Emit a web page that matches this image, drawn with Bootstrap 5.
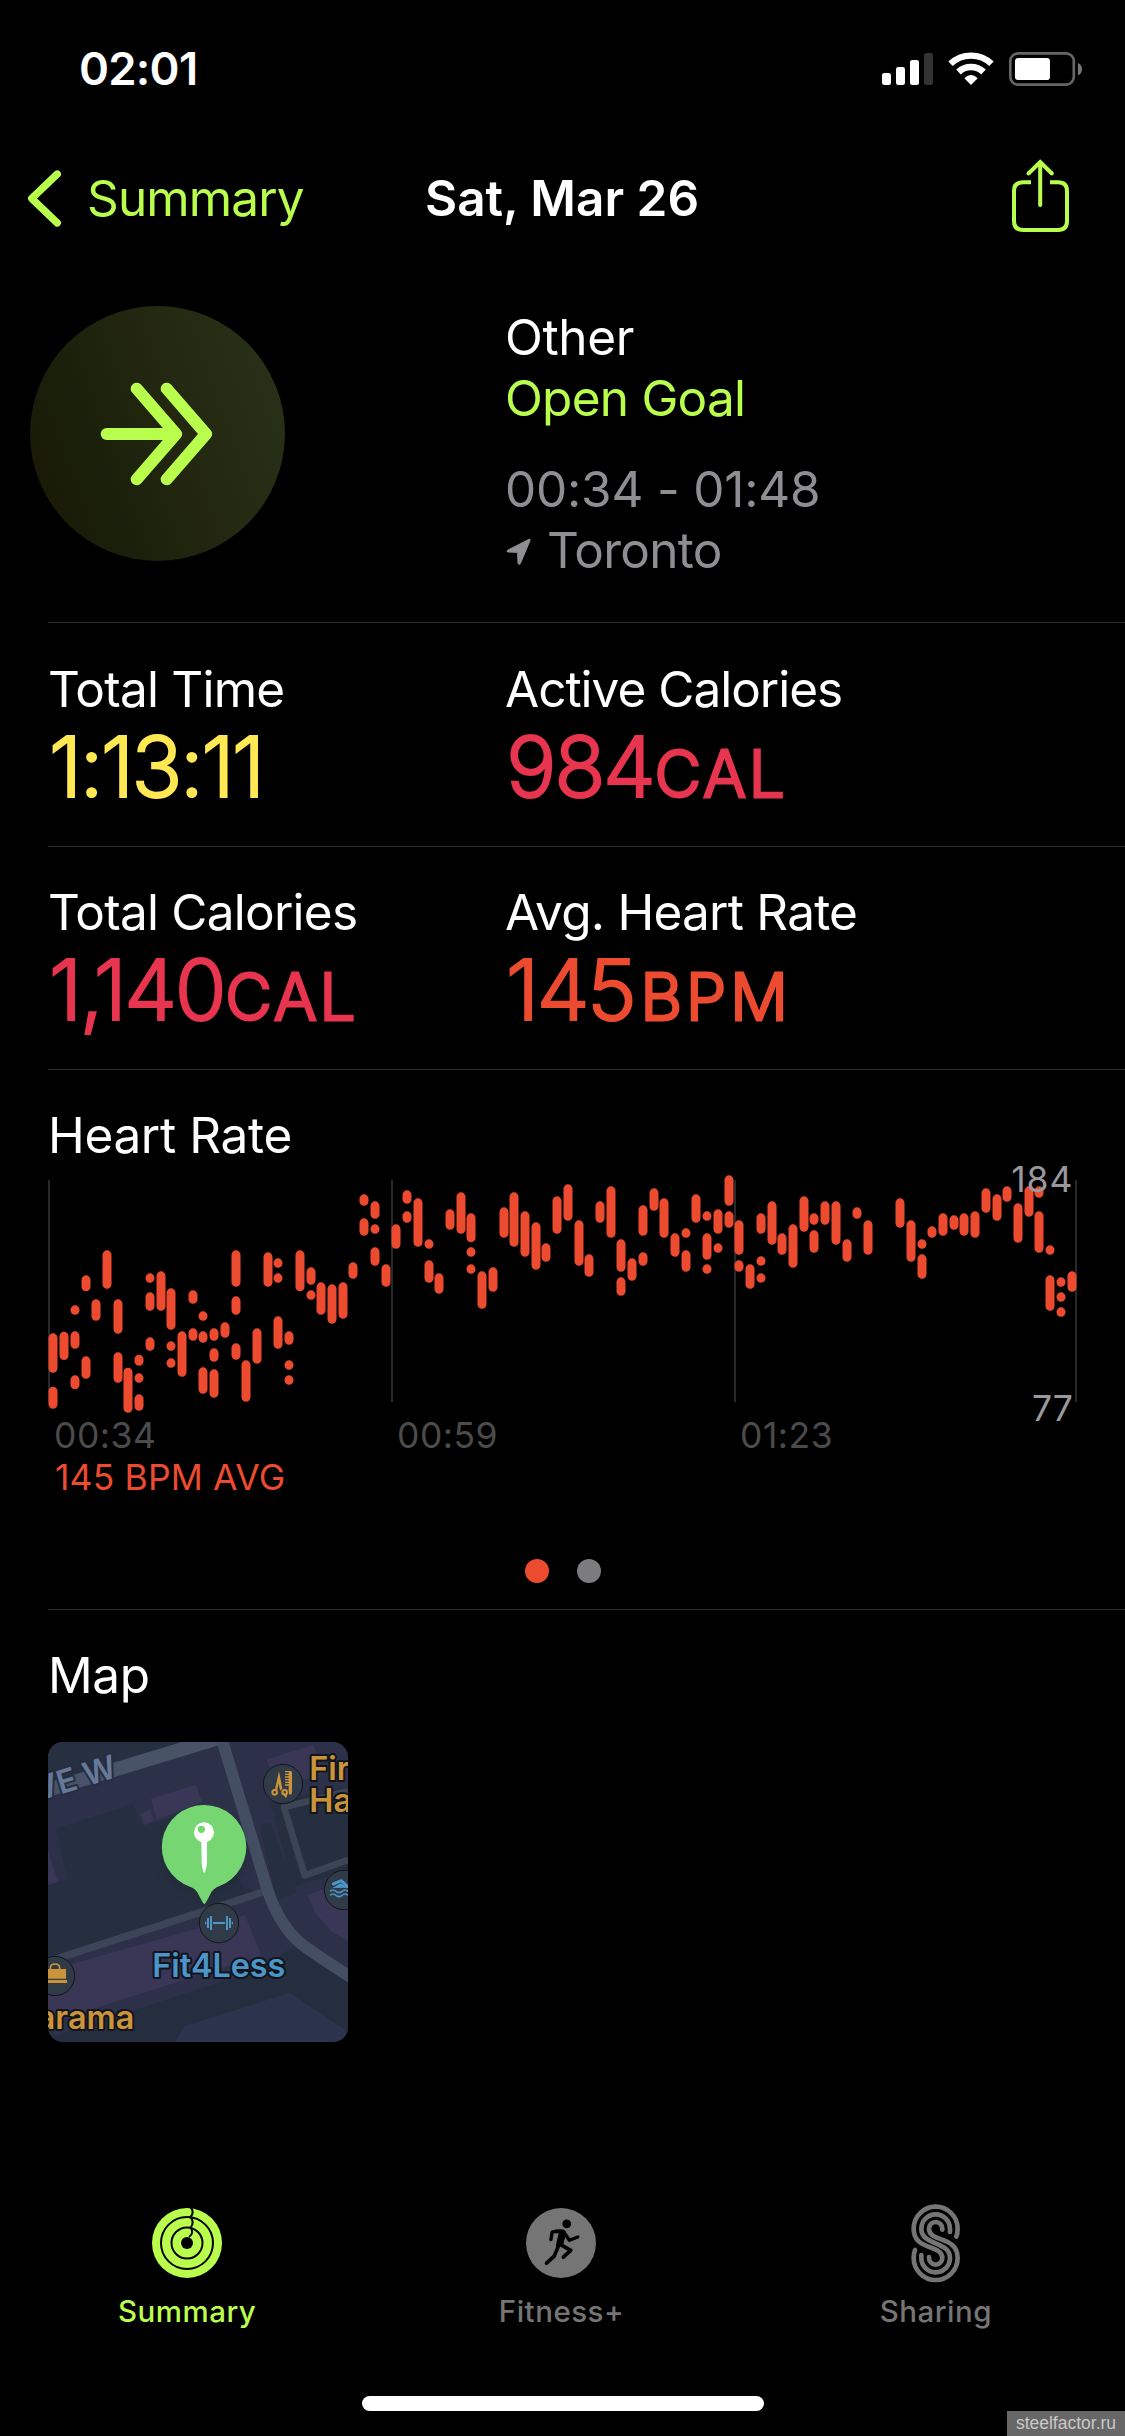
<!DOCTYPE html>
<html lang="en">
<head>
<meta charset="utf-8">
<title>Workout Summary</title>
<meta name="viewport" content="width=device-width, initial-scale=1">
<link href="https://cdn.jsdelivr.net/npm/bootstrap@5.3.0/dist/css/bootstrap.min.css" rel="stylesheet">
<style>
  :root { --lime: #bafe4d; --orange: #ec4b30; --pink: #e8354f; --yellow: #ffe853; --hair: #2d2d2f; --mute: #8e8e93; }
  body { background: #000; color: #fff; font-family: Inter, "Liberation Sans", sans-serif; font-size: 49.5px; line-height: 61px; }
  svg { display: block; flex: none; overflow: visible; }
  .screen { width: 1125px; height: 2436px; overflow: hidden; }
  .lime { color: var(--lime); } .orange { color: var(--orange); } .pink { color: var(--pink); } .yellow { color: var(--yellow); } .mute { color: var(--mute); }
  .ls-1 { letter-spacing: -1px; } .ls-2 { letter-spacing: -.76px; } .ls-3 { letter-spacing: -.35px; }

  .statusbar { height: 137px; padding: 0 42px 0 79px; }
  .clock { font-size: 45.5px; font-weight: 600; letter-spacing: -.75px; }
  .topnav { height: 122px; padding: 0 55px 0 28px; }
  .topnav .back { padding-left: 26px; letter-spacing: -.85px; }
  .topnav .side { width: 360px; }
  .topnav .side:first-child { width: 397px; }

  .hero { height: 363px; padding-left: 30px; }
  .hero-badge { width: 255px; height: 255px; margin-top: 47px; background: linear-gradient(70deg, #191a06 8%, #1a200b 30%, #23270f 55%, #283118 92%); }
  .hero-info { margin: 48px 0 0 220px; }
  .hero-time { margin-top: 30px; letter-spacing: -.2px; }

  .rule { border-top: 1px solid var(--hair); margin-left: 48px; }
  .metric { height: 223.5px; }
  .metric > div { padding-top: 35.5px; }
  .metric > div:first-child { width: 457px; }
  .metric-value { font-size: 84px; font-weight: 300; line-height: 90px; margin-top: 2px; padding-left: 1px; letter-spacing: -2.4px; -webkit-text-stroke: 2px currentColor; stroke-linejoin: round; }
  .metric-value small { font-size: 64px; letter-spacing: 2.8px; margin-left: 1px; -webkit-text-stroke-width: 2.8px; }
  .metric-value small.wide { letter-spacing: 4px; margin-left: 6px; }

  .hr-block { height: 540px; }
  .hr-block h2, .map-block h2 { font-size: inherit; font-weight: 400; line-height: 61px; padding-top: 35px; margin: 0; }
  .plot { margin-top: -.5px; }
  .plot text { font-size: 106.5px; fill: #98989d; letter-spacing: 2.5px; }
  .plot .low { letter-spacing: 0; }
  .ticks { font-size: 35.5px; line-height: 42px; color: #4b4b4b; letter-spacing: .5px; margin-top: 9px; }
  .ticks span { width: 343px; padding-left: 6px; }
  .avg { font-size: 35.5px; line-height: 42px; padding-left: 7px; letter-spacing: .15px; }
  .pager { gap: 28px; margin: 60px 47px 0 0; }
  .pager i { width: 24px; height: 24px; background: #7c7c80; }
  .pager i:first-child { background: var(--orange); }

  .map-tile { width: 300px; height: 300px; border-radius: 15px; overflow: hidden; margin-top: 36px; }
  .map-tile text { font-weight: 600; paint-order: stroke; stroke: #12141c; stroke-width: 12px; stroke-linejoin: round; }

  .tabs { margin-top: 161.5px; padding-right: 2px; font-size: 29.5px; font-weight: 500; line-height: 40px; color: #757575; letter-spacing: .5px; }
  .tabs .icon { height: 78px; margin-bottom: 9.5px; }
  .home { width: 402px; height: 15px; border-radius: 8px; background: #fff; margin: 65px auto 0; }
  .stamp { right: 0; bottom: 0; width: 118px; height: 25px; background: #676767; color: #c9c9c9; font: 17.5px/25px "Liberation Sans", Arial, sans-serif; }
</style>
</head>
<body>
<div class="screen position-relative d-flex flex-column">

  <header class="statusbar d-flex justify-content-between align-items-center">
    <span class="clock">02:01</span>
    <svg width="203.3" height="36.7" viewBox="60 60 610 110">
      <g fill="#fff"><rect x="66" y="129" width="27" height="36" rx="7"/><rect x="108" y="111" width="27" height="54" rx="7"/><rect x="150" y="90" width="27" height="75" rx="7"/></g>
      <rect x="192" y="69" width="27" height="96" rx="7" fill="#333"/>
      <g fill="none" stroke="#fff"><path d="M271.6 101.4A89 89 0 0 1 394.4 101.4" stroke-width="19"/><path d="M295.5 126A54.500 54.500 0 0 1 370.500 126" stroke-width="20"/></g>
      <path d="M333 165L313 145Q333 125 353 145Z" fill="#fff"/>
      <rect x="451" y="70" width="190.500" height="94" rx="23" fill="none" stroke="#666" stroke-width="8"/>
      <rect x="465" y="84" width="105" height="66" rx="10" fill="#fff"/>
      <path d="M654 99Q666 104 666 117.500T654 136Z" fill="#777"/>
    </svg>
  </header>

  <nav class="topnav d-flex justify-content-between align-items-center">
    <a class="side d-flex align-items-center text-decoration-none lime">
      <svg width="33" height="57" viewBox="28 169 33 57"><path d="M57.300 173L31.700 197.500L57.300 222" fill="none" stroke="#bafe4d" stroke-width="7.300" stroke-linecap="round" stroke-linejoin="round"/></svg>
      <span class="back">Summary</span>
    </a>
    <span class="fw-semibold text-nowrap flex-fill">Sat, Mar 26</span>
    <span class="side d-flex justify-content-end">
      <svg width="60" height="76" viewBox="1010 160 60 76"><path d="M1031 182.300H1023Q1014 182.300 1014 191V221Q1014 230 1023 230H1058Q1067 230 1067 221V191Q1067 182.300 1058 182.300H1050M1040.200 205V162.500M1028.500 173.500L1040.200 162L1051.800 173.500" fill="none" stroke="#bafe4d" stroke-width="4"/><g fill="#bafe4d"><circle cx="1040.200" cy="205" r="2"/><circle cx="1028.500" cy="173.500" r="2"/><circle cx="1051.800" cy="173.500" r="2"/></g></svg>
    </span>
  </nav>

  <section class="hero d-flex align-items-start">
    <div class="hero-badge rounded-circle">
      <svg width="255" height="255" viewBox="30 468 765 765"><path d="M350 716L468 852L350 988M440 716L558 852L440 988M260 852H460" fill="none" stroke="#bafe4d" stroke-width="36" stroke-linecap="round" stroke-linejoin="round"/></svg>
    </div>
    <div class="hero-info">
      <div class="ls-3">Other</div>
      <div class="lime ls-2">Open Goal</div>
      <div class="hero-time mute">00:34 - 01:48</div>
      <div class="mute ls-2 d-flex align-items-center">
        <svg width="42" height="30" viewBox="45 50 126 90"><path d="M54 92L117 60Q121 59 120 64L91 133Q86 138 84 132L83 102Q82 99 78 99L53 98Q48 96 54 92Z" fill="#8e8e93" stroke="#8e8e93" stroke-width="3"/></svg>Toronto
      </div>
    </div>
  </section>

  <section class="rule metric d-flex">
    <div><div class="ls-2">Total Time</div><div class="metric-value yellow">1:13:11</div></div>
    <div><div class="ls-1">Active Calories</div><div class="metric-value pink">984<small>CAL</small></div></div>
  </section>
  <section class="rule metric d-flex">
    <div><div class="ls-2">Total Calories</div><div class="metric-value pink">1,140<small>CAL</small></div></div>
    <div><div class="ls-2">Avg. Heart Rate</div><div class="metric-value orange">145<small class="wide">BPM</small></div></div>
  </section>

  <section class="rule hr-block">
    <h2 class="ls-3">Heart Rate</h2>
    <svg class="plot" width="1029" height="240" viewBox="54 18 3087 720">
      <path d="M57 60V726M1086 60V726M2115 60V726M3138 60V726" stroke="#29292b" stroke-width="6"/>
      <path id="beats" fill="none" stroke="#ec4b30" stroke-width="27" stroke-linecap="round"/>
      <text x="2944" y="96">184</text>
      <text class="low" x="3006" y="783">77</text>
    </svg>
    <div class="ticks d-flex"><span>00:34</span><span>00:59</span><span>01:23</span></div>
    <div class="avg orange">145 BPM AVG</div>
    <div class="pager d-flex justify-content-center"><i class="rounded-circle"></i><i class="rounded-circle"></i></div>
  </section>

  <section class="rule map-block">
    <h2 class="ls-3">Map</h2>
    <div class="map-tile">
      <svg width="300" height="300" viewBox="54 66 900 900">
        <rect x="54" y="66" width="900" height="900" fill="#2c3049"/>
        <path d="M54 66H460L54 190Z" fill="#263040"/>
        <path d="M76 326L310 252L338 318L500 270L640 500L690 520L54 720V495L112 478Z" fill="#252f3f"/>
        <path d="M54 390L84 486L54 495Z" fill="#393656"/>
        <path d="M362 236L498 194L516 246L380 300Z M332 282L360 268L372 302L344 314Z" fill="#393656"/>
        <path d="M710 118L850 74L880 160L740 206Z" fill="#393656"/>
        <path d="M722 250L790 500L954 450V200Z M690 318L722 306L800 520L740 540Z" fill="#252f3f"/>
        <path d="M54 752L645 585L694 706L54 910Z" fill="#393656"/>
        <path d="M832 524L954 480V664L905 635L856 580Z" fill="#393656"/>
        <path d="M54 955L700 744L790 680L954 790V966H54Z" fill="#242e3f"/>
        <path d="M435 966L465 918L780 818L954 935V966Z" fill="#2b344c"/>
        <g fill="none" stroke-linejoin="round">
          <path d="M954 214L762 262L824 466L954 420" stroke="#3c4556" stroke-width="20"/>
          <path d="M80 716L700 516" stroke="#3c4558" stroke-width="22"/>
          <path d="M40 214L580 50" stroke="#485368" stroke-width="42"/>
          <path d="M576 60L712 508Q748 616 812 670Q850 700 970 776" stroke="#444e63" stroke-width="35"/>
        </g>
        <g fill="#313b47" stroke="#11161b" stroke-width="3"><circle cx="759" cy="192" r="59"/><circle cx="942" cy="510" r="59"/><circle cx="567" cy="609" r="59"/><circle cx="75" cy="768" r="59"/></g>
        <g stroke="#cc943a" fill="none" stroke-width="6"><circle cx="734" cy="217" r="7"/><circle cx="764" cy="217" r="7"/></g>
        <path d="M747 154L757 206L750 212L746 190L741 212L735 208ZM758 215L772 227L768 234L755 219Z" fill="#cc943a"/>
        <path d="M776 153H783Q786 153 786 160V216Q786 224 780 224Q776 224 776 216Z" fill="#cc943a"/>
        <path d="M765 155H778M765 163H778M765 171H778M765 179H778M765 187H778M765 195H778" stroke="#cc943a" stroke-width="4"/>
        <g fill="none" stroke="#4b95c8"><path d="M549 609H585" stroke-width="6"/><path d="M543 588V630M591 588V630" stroke-width="6"/><path d="M534 594V624M600 594V624" stroke-width="6"/><path d="M527 605V613M607 605V613" stroke-width="4"/>
        <path d="M900 514q9 -8 18 0t18 0t18 0M900 526q9 -8 18 0t18 0t18 0" stroke-width="5"/><path d="M910 492L934 482L952 500" stroke-width="9" stroke-linejoin="round" stroke-linecap="round"/></g>
        <path d="M908 504L932 490L954 503Z" fill="#4b95c8"/>
        <path d="M54 747H108V776H54ZM54 780H111V789H54Z" fill="#cc943a"/>
        <path d="M61 748V744Q61 732 75 732T89 744V748" fill="none" stroke="#cc943a" stroke-width="5"/>
        <text x="367" y="771" font-size="97" fill="#4b95c8">Fit4Less</text>
        <text x="838" y="181" font-size="97" fill="#cc943a">Fir</text>
        <text x="838" y="277" font-size="97" fill="#cc943a">Ha</text>
        <text x="20" y="928" font-size="97" fill="#cc943a" letter-spacing=".3">arama</text>
        <text transform="translate(24 244) rotate(-17)" font-size="97" fill="#66789a" style="stroke:#262d3e">VE W</text>
        <g>
          <ellipse cx="522" cy="410" rx="122" ry="112" fill="#1d2634" opacity=".5" style="filter:blur(18px)"/>
          <path d="M523 255A126 126 0 0 1 567 499Q550 504 540 524Q530 545 523 553Q516 545 506 524Q498 506 480 500A126 126 0 0 1 523 255Z" fill="#76d672"/>
          <path d="M514 360H531V430Q528 452 523 460Q517 452 515 430Z" fill="#fff"/>
          <circle cx="522" cy="337" r="30" fill="#fff"/><circle cx="514" cy="328" r="11" fill="#76d672"/>
        </g>
      </svg>
    </div>
  </section>

  <footer class="tabs d-flex text-center">
    <div class="flex-fill w-100 lime">
      <div class="icon d-flex justify-content-center align-items-center">
        <svg width="70" height="70" viewBox="-35 -35 70 70"><circle r="35" fill="#bafe4d"/><circle r="6" fill="#000"/><g fill="none" stroke="#000" stroke-width="2"><circle r="26"/><circle r="15.500"/><path d="M3.500 -36Q8 -30.500 3.500 -26Q8 -20.500 3.500 -15.500Q7.500 -10 2 -6"/></g></svg>
      </div>Summary
    </div>
    <div class="flex-fill w-100">
      <div class="icon d-flex justify-content-center align-items-center">
        <svg width="70" height="70" viewBox="79 55 208 208"><circle cx="183" cy="159" r="104" fill="#757575"/><circle cx="200" cy="102" r="13"/><path d="M164 119H190Q202 124 196 140L189 166L170 174Q166 166 170 156L176 130Z"/><g fill="none" stroke="#000" stroke-width="10" stroke-linecap="round" stroke-linejoin="round"><path d="M184 124L157 126L153 149M192 128L208 151L233 141"/><path d="M182 164L212 181L190 201M176 166L163 198L140 219" stroke-width="11"/></g></svg>
      </div>Fitness+
    </div>
    <div class="flex-fill w-100">
      <div class="icon d-flex justify-content-center align-items-center">
        <svg width="49.300" height="78" viewBox="335 72 148 234" fill="none" stroke="#757575" stroke-width="14" stroke-linecap="round"><path d="M471 170Q475 160 475 146A66 66 0 0 0 343 146C343 214 429 192 429 234A20 20 0 0 1 389 234V231"/><path d="M452 156V146A43 43 0 0 0 366 146C366 198 452 182 452 234A43 43 0 0 1 366 234V225"/><path d="M429 149V146A20 20 0 0 0 389 146C389 188 475 166 475 234A66 66 0 0 1 343 234Q343 220 347 210"/></svg>
      </div>Sharing
    </div>
  </footer>
  <div class="home"></div>
  <div class="stamp position-absolute text-center">steelfactor.ru</div>
</div>

<script>
  // Each entry: column centre, then top/bottom pairs of the heart-rate ranges in that column.
  const ranges = [
    [69,520,638,680,746],[102,515,600],[135,436,464,514,566,646,688],[168,346,394,589,656],[198,418,482],[231,271,386],
    [264,418,521,577,668],[294,623,758],[327,584,617,640,668,703,752],[360,340,368,397,452,532,572],[393,334,452],
    [423,385,509,544,572,595,623],[456,514,650],[489,391,431,505,542],[519,454,482,514,548,622,701],
    [552,505,542,565,605,628,713],[585,487,533],[618,271,380,409,464,550,599],[648,601,725],[681,505,611],[714,277,380],
    [744,295,323,340,368,469,566],[777,514,554,601,629,646,674],[810,271,394],[843,322,374,391,419],[873,367,464],
    [906,373,491],[939,367,476],[969,307,356],[1002,103,137,175,227],[1035,124,176,193,221,262,317],[1068,313,380],
    [1098,193,266],[1131,91,131,154,188],[1164,115,260],[1197,238,266,301,368],[1227,340,401],[1260,148,209],
    [1293,97,221],[1323,160,247,262,290,313,341],[1356,334,446],[1389,322,395],[1422,142,233],[1452,97,260],
    [1485,154,290],[1518,187,329],[1548,250,305],[1581,109,221],[1614,73,182],[1647,181,317],[1677,283,350],
    [1710,124,188],[1743,79,233],[1773,238,335,352,407],[1806,295,362],[1839,136,227,277,317],[1872,85,152],
    [1902,115,233],[1935,220,290],[1968,205,233,271,335],[1998,103,188],[2031,154,182,220,299,313,341],
    [2064,148,221,250,278],[2097,46,137,154,203],[2127,181,284,301,335],[2160,313,386],[2193,160,221,289,317,340,368],
    [2226,124,254],[2256,220,284],[2289,193,323],[2322,109,215],[2352,160,194,211,278],[2385,124,194],[2418,124,254],
    [2451,238,305],[2481,142,176],[2514,181,284],[2610,115,203],[2643,181,305],[2676,238,266,283,356],[2706,199,233],
    [2739,160,227],[2772,166,209],[2802,160,227],[2835,154,233],[2868,85,158],[2901,103,182],[2931,79,125],
    [2964,130,248],[2997,79,170],[3027,79,113,154,278],[3060,256,284,346,452],[3093,352,380,397,425,442,470],[3126,334,395]
  ];
  let d = '';
  for (const [x, ...r] of ranges)
    for (let i = 0; i < r.length; i += 2) d += `M${x} ${r[i] + 13.5}V${r[i + 1] - 13.4}`;
  document.getElementById('beats').setAttribute('d', d);
</script>
</body>
</html>
